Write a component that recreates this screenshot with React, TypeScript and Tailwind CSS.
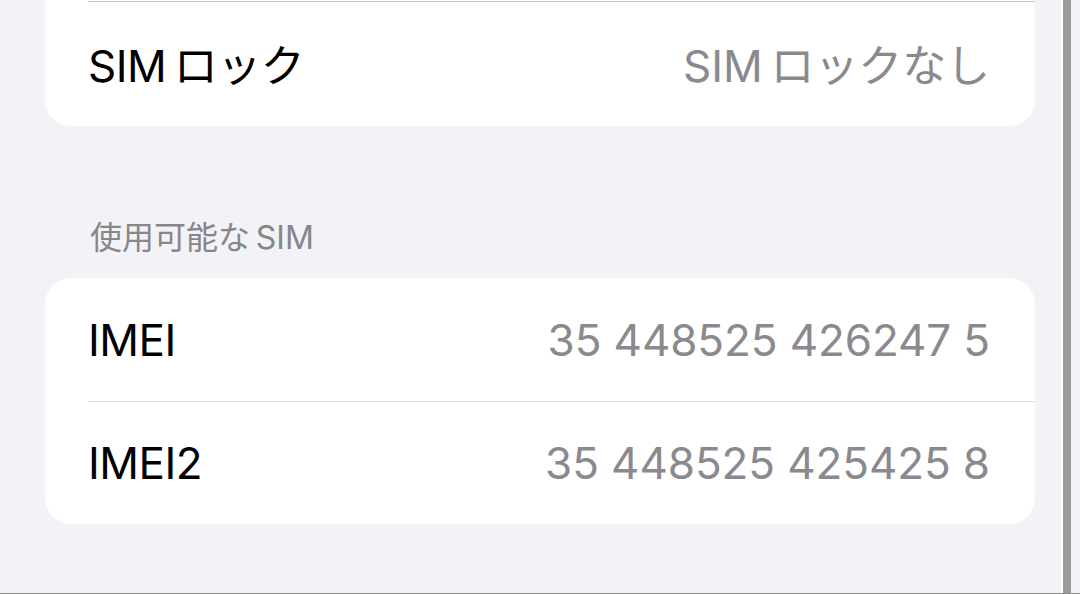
const font = "font-['Inter','Noto_Sans_CJK_JP',sans-serif]";

function Row({
  label,
  value,
  divider,
  className,
}: {
  label: string;
  value: string;
  divider?: string;
  className?: string;
}) {
  return (
    <div className={`ml-[43px] flex items-center justify-between pr-[45px] ${divider ?? ""} ${className ?? ""}`}>
      <span className="text-[44px] leading-none tracking-[-0.5px] text-black">{label}</span>
      <span className="text-[44px] leading-none tracking-[-0.1px] text-[#8a8a8e]">{value}</span>
    </div>
  );
}

export default function App() {
  return (
    <div className={`relative h-[594px] w-[1080px] overflow-hidden bg-[#f2f2f7] ${font}`}>
      <div className="ml-[45px] w-[990px]">
        {/* tail of the card above */}
        <div className="rounded-b-[26px] bg-white">
          <div className="h-px" />
          <Row
            label={"SIM\u2009ロック"}
            value={"SIM\u2009ロックなし"}
            divider="border-t border-[#c8c8cc]"
            className="h-[125px] pt-[4px]"
          />
        </div>

        <div className="pl-[45px] pt-[96px] pb-[24px]">
          <span className="block text-[32px] leading-[32px] text-[#86868b]">{"使用可能な\u2009SIM"}</span>
        </div>

        <div className="rounded-[26px] bg-white">
          <Row label="IMEI" value="35 448525 426247 5" className="h-[123px]" />
          <Row
            label="IMEI2"
            value="35 448525 425425 8"
            divider="border-t border-[#e0e0e4]"
            className="h-[123px]"
          />
        </div>
      </div>

      {/* scroll indicator */}
      <div className="absolute top-0 bottom-0 left-[1061px] w-[2px] bg-white" />
      <div className="absolute top-0 bottom-0 left-[1063px] w-[8px] bg-[#9b9b9b]" />
      <div className="absolute bottom-0 left-0 h-px w-full bg-[#8a8a8a]" />
    </div>
  );
}
